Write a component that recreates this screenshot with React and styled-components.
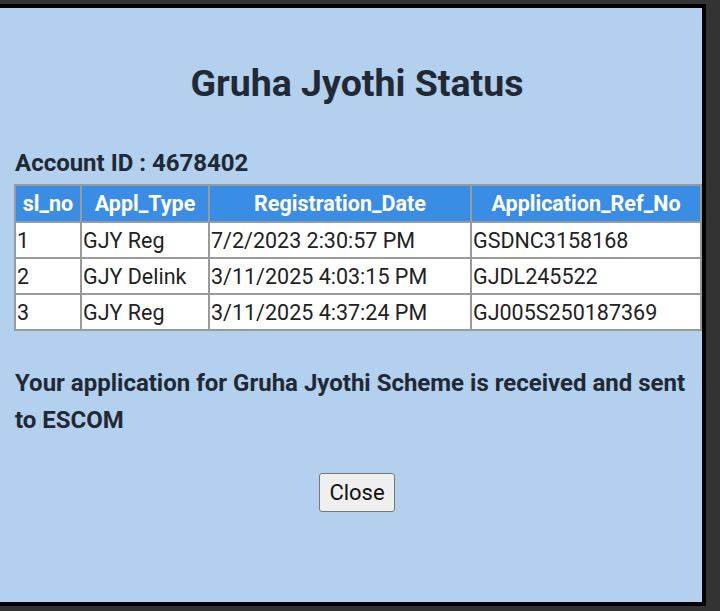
import styled, { createGlobalStyle } from 'styled-components';

const rows = [
	{ sl: '1', type: 'GJY Reg', date: '7/2/2023 2:30:57 PM', ref: 'GSDNC3158168' },
	{ sl: '2', type: 'GJY Delink', date: '3/11/2025 4:03:15 PM', ref: 'GJDL245522' },
	{ sl: '3', type: 'GJY Reg', date: '3/11/2025 4:37:24 PM', ref: 'GJ005S250187369' },
];

const GlobalStyle = createGlobalStyle`
	html, body {
		margin: 0;
		padding: 0;
		background: #333333;
		font-family: Roboto, 'Noto Sans', sans-serif;
	}
	#root {
		height: 611px;
		overflow: hidden;
	}
`;

export default function App() {
	return (
		<>
			<GlobalStyle />
			<StyledScreen>
				<StyledModal>
					<StyledTitle>Gruha Jyothi Status</StyledTitle>
					<StyledAccount>Account ID : 4678402</StyledAccount>
					<StyledTable>
						<colgroup>
							<col style={{ width: 66 }} />
							<col style={{ width: 128 }} />
							<col style={{ width: 262 }} />
							<col />
						</colgroup>
						<thead>
							<tr>
								<th>sl_no</th>
								<th>Appl_Type</th>
								<th>Registration_Date</th>
								<th>Application_Ref_No</th>
							</tr>
						</thead>
						<tbody>
							{rows.map((row) => (
								<tr key={row.sl}>
									<td>{row.sl}</td>
									<td>{row.type}</td>
									<td>{row.date}</td>
									<td>{row.ref}</td>
								</tr>
							))}
						</tbody>
					</StyledTable>
					<StyledMessage>
						Your application for Gruha Jyothi Scheme is received and sent to ESCOM
					</StyledMessage>
					<StyledFooter>
						<StyledCloseButton type='button'>Close</StyledCloseButton>
					</StyledFooter>
				</StyledModal>
			</StyledScreen>
		</>
	);
}

const StyledScreen = styled.div`
	padding-top: 4px;
`;
const StyledModal = styled.div`
	box-sizing: content-box;
	width: 702px;
	height: 594px;
	background: #b3d0ee;
	border-top: 4px solid #000;
	border-right: 4px solid #000;
	border-bottom: 4px solid #000;
	color: #212935;
`;
const StyledTitle = styled.h2`
	margin: 53px 0 0 0;
	padding-left: 12px;
	font-size: 37.5px;
	line-height: 44px;
	font-weight: 700;
	text-align: center;
`;
const StyledAccount = styled.h4`
	margin: 44px 0 0 15px;
	font-size: 24px;
	line-height: 28px;
	font-weight: 700;
`;
const StyledTable = styled.table`
	margin: 7px 0 0 14px;
	width: 688px;
	table-layout: fixed;
	border-collapse: collapse;
	background: #fff;
	font-size: 21.5px;
	th,
	td {
		border: 2px solid #9a9a9a;
		padding: 0 1px;
		white-space: nowrap;
	}
	th {
		height: 35px;
		background: #3a8de5;
		color: #fff;
		font-weight: 700;
		text-align: center;
	}
	td {
		height: 34px;
		color: #222;
		text-align: left;
	}
`;
const StyledMessage = styled.p`
	margin: 34px 0 0 15px;
	padding-right: 14px;
	font-size: 24px;
	line-height: 37px;
	font-weight: 700;
`;
const StyledFooter = styled.div`
	display: flex;
	justify-content: center;
	margin-top: 34px;
`;
const StyledCloseButton = styled.button`
	height: 39px;
	padding: 0 9px;
	margin-left: 12px;
	font-family: Roboto, sans-serif;
	font-size: 22px;
	color: #111;
	background: #efefef;
	border: 1px solid #767676;
	border-radius: 3px;
`;
